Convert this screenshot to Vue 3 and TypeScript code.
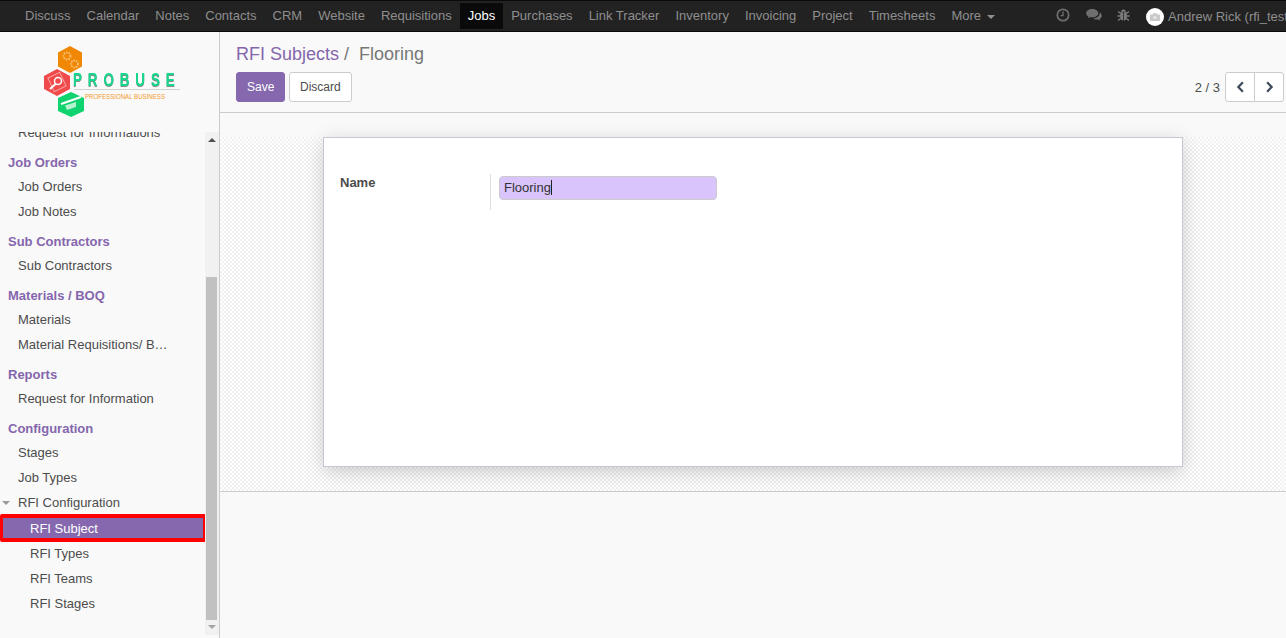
<script setup lang="ts">
const navItems: string[] = ['Discuss','Calendar','Notes','Contacts','CRM','Website','Requisitions','Jobs','Purchases','Link Tracker','Inventory','Invoicing','Project','Timesheets']
interface Row { label: string; kind: 'head' | 'item' | 'sub' | 'parent' | 'active' }
const rows: Row[] = [
  { label: 'Job Orders', kind: 'head' },
  { label: 'Job Orders', kind: 'item' },
  { label: 'Job Notes', kind: 'item' },
  { label: 'Sub Contractors', kind: 'head' },
  { label: 'Sub Contractors', kind: 'item' },
  { label: 'Materials / BOQ', kind: 'head' },
  { label: 'Materials', kind: 'item' },
  { label: 'Material Requisitions/ BOQ', kind: 'item' },
  { label: 'Reports', kind: 'head' },
  { label: 'Request for Information', kind: 'item' },
  { label: 'Configuration', kind: 'head' },
  { label: 'Stages', kind: 'item' },
  { label: 'Job Types', kind: 'item' },
  { label: 'RFI Configuration', kind: 'parent' },
  { label: 'RFI Subject', kind: 'active' },
  { label: 'RFI Types', kind: 'sub' },
  { label: 'RFI Teams', kind: 'sub' },
  { label: 'RFI Stages', kind: 'sub' },
]
</script>

<template>
  <div class="app">
    <header class="topbar">
      <nav class="topnav">
        <a v-for="n in navItems" :key="n" class="navlink" :class="{ on: n === 'Jobs' }">{{ n }}</a>
        <a class="navlink">More <span class="caret"></span></a>
      </nav>
      <div class="sys">
        <svg class="sysicon clock" viewBox="0 0 14 14" width="14" height="14">
          <circle cx="7" cy="7" r="5.7" fill="none" stroke="#6f6f6f" stroke-width="1.7"/>
          <path d="M7 3.5V7.6H4.6" fill="none" stroke="#6f6f6f" stroke-width="1.3"/>
        </svg>
        <svg class="sysicon chat" viewBox="0 0 16 14" width="16" height="14">
          <path d="M6.3 1C2.9 1 .2 2.9.2 5.2c0 1.4 1 2.6 2.400 3.300-.2.7-.6 1.300-1.100 1.800 1.100-.1 2.200-.5 3-1.200.6.100 1.200.2 1.800.2 3.400 0 6-1.900 6-4.100S9.700 1 6.300 1z" fill="#6f6f6f"/>
          <path d="M13.600 4.200c.1.3.1.7.1 1 0 2.800-2.900 5-6.600 5.100.9.800 2.200 1.300 3.700 1.300.5 0 .9 0 1.300-.1.700.6 1.500.9 2.400 1.100-.4-.5-.7-1-.9-1.600 1.200-.6 2.200-1.700 2.200-2.900 0-1.600-.9-3.100-2.200-3.900z" fill="#6f6f6f"/>
        </svg>
        <svg class="sysicon bug" viewBox="0 0 14 14" width="13" height="14">
          <path d="M4.300 3.400C4.300 2 5.500 1 7 1s2.700 1 2.700 2.400z" fill="#7b7b7b"/>
          <path d="M3.400 4.100h3.200V13C4.700 12.800 3.400 11.500 3.400 9.800zM7.400 4.100h3.200v5.700c0 1.700-1.300 3-3.200 3.200z" fill="#7b7b7b"/>
          <path d="M1.200 3.200L3.600 5.200M12.800 3.200L10.400 5.200M.4 8H3.700M13.600 8H10.300M1.200 13L3.800 10.800M12.800 13L10.200 10.800" stroke="#7b7b7b" stroke-width="1.500" fill="none"/>
        </svg>
        <span class="user">
          <span class="avatar">
            <svg viewBox="0 0 10 8" width="10" height="8"><path d="M0 1.500h2.500L3.300.3h3.400l.8 1.200H10V8H0z" fill="#c9c9c9"/><circle cx="5" cy="4.500" r="1.600" fill="#e8e8e8"/></svg>
          </span>
          <span class="uname">Andrew Rick (rfi_test)</span>
        </span>
      </div>
    </header>

    <div class="body">
      <aside class="side">
        <div class="logo">
          <svg viewBox="0 0 140 76" width="140" height="76">
            <polygon points="26,0 38,6.500 38,20.500 26,27 14,20.500 14,6.500" fill="#f18805"/>
            <circle cx="23" cy="10" r="3.500" fill="none" stroke="#f9c377" stroke-width="1.800" stroke-dasharray="1.500 1"/>
            <circle cx="30.500" cy="18" r="3.500" fill="none" stroke="#f9c377" stroke-width="1.800" stroke-dasharray="1.500 1"/>
            <polygon points="13,23 26,30 26,43 13,50 0,43 0,30" fill="#f04a4a"/>
            <rect x="6.500" y="28.500" width="13" height="15" fill="none" stroke="#f9a5a5" transform="rotate(-25 13 36)"/>
            <circle cx="14" cy="35" r="3.500" fill="none" stroke="#fff" stroke-width="1.500"/>
            <path d="M11.500 38L6 43" stroke="#fff" stroke-width="2"/>
            <polygon points="27,46 40,52 40,65 27,71 14,65 14,52" fill="#0fd36f"/>
            <path d="M17 58L37 51" stroke="#fff" stroke-width="2.200"/>
            <path d="M21 59.500l11-3.500v5l-9 3z" fill="#b5f2cf"/>
            <rect x="30" y="43" width="106" height="1" fill="#d2d2d2"/>
            <text class="ptext" transform="translate(29 40) scale(.75 1)">PROBUSE</text>
            <text class="stext" x="41" y="53" textLength="80" lengthAdjust="spacingAndGlyphs">PROFESSIONAL BUSINESS</text>
          </svg>
        </div>
        <div class="menuwrap">
          <div class="menu">
            <div class="clipped">Request for Informations</div>
            <template v-for="(r, i) in rows" :key="i">
              <div v-if="r.kind === 'head'" class="mhead">{{ r.label }}</div>
              <div v-else-if="r.kind === 'parent'" class="mitem parent"><span class="tri"></span>{{ r.label }}</div>
              <div v-else-if="r.kind === 'active'" class="mactive">{{ r.label }}</div>
              <div v-else-if="r.kind === 'sub'" class="mitem sub">{{ r.label }}</div>
              <div v-else class="mitem"><span class="ell">{{ r.label }}</span></div>
            </template>
          </div>
          <div class="sbar">
            <span class="arr up"></span>
            <div class="track"><div class="thumb"></div></div>
            <span class="arr down"></span>
          </div>
        </div>
      </aside>

      <main class="main">
        <section class="panel">
          <h1 class="crumbs"><a class="crumb">RFI Subjects</a><span class="sep">/</span><span class="cur">Flooring</span></h1>
          <div class="actions">
            <div class="btns">
              <button class="btn primary">Save</button>
              <button class="btn">Discard</button>
            </div>
            <div class="pager">
              <span class="count">2 / 3</span>
              <div class="pbtns">
                <button class="pbtn"><svg viewBox="0 0 10 14" width="9" height="12"><path d="M7.800 1.500L2.500 7l5.300 5.500" fill="none" stroke="#3f4a5c" stroke-width="2.600"/></svg></button>
                <button class="pbtn"><svg viewBox="0 0 10 14" width="9" height="12"><path d="M2.200 1.500L7.500 7l-5.300 5.500" fill="none" stroke="#3f4a5c" stroke-width="2.600"/></svg></button>
              </div>
            </div>
          </div>
        </section>
        <div class="gap"></div>
        <section class="sheetbg">
          <div class="sheet">
            <div class="field">
              <label class="flabel">Name</label>
              <div class="fvalue"><div class="finput">Flooring<span class="cursor"></span></div></div>
            </div>
          </div>
        </section>
      </main>
    </div>
  </div>
</template>

<style scoped>
.app { width: 1286px; height: 638px; overflow: hidden; display: flex; flex-direction: column; font-family: "Liberation Sans", Arial, sans-serif; font-size: 13px; color: #4c4c4c; background: #f9f9f9; }
.topbar { height: 32px; flex: none; box-sizing: border-box; background: #222; border-top: 1px solid #0a0a0a; border-bottom: 1px solid #0a0a0a; display: flex; justify-content: space-between; overflow: hidden; }
.topnav { display: flex; padding-left: 17px; }
.navlink { display: block; height: 26px; margin-top: 2px; line-height: 26px; padding: 0 8px; color: #8f8f8f; white-space: nowrap; }
.navlink.on { background: #0a0a0a; color: #fff; }
.caret { display: inline-block; margin-left: 2px; vertical-align: middle; border-top: 4px solid #8f8f8f; border-left: 4px solid transparent; border-right: 4px solid transparent; }
.sys { display: flex; align-items: center; width: 230px; flex: none; overflow: hidden; position: relative; box-sizing: border-box; }
.sysicon { flex: none; }
.clock { margin-right: 16px; margin-top: -2px; }
.chat { margin-right: 15px; margin-top: -2px; }
.bug { margin-right: 16px; margin-top: -2px; }
.user { display: flex; align-items: center; white-space: nowrap; color: #8f8f8f; }
.avatar { width: 18px; height: 18px; border-radius: 50%; background: #fff; display: flex; align-items: center; justify-content: center; margin-right: 4px; margin-top: 1px; flex: none; }
.body { flex: 1; display: flex; min-height: 0; }
.side { width: 220px; flex: none; box-sizing: border-box; border-right: 1px solid #ccc; display: flex; flex-direction: column; background: #f9f9f9; }
.logo { height: 100px; flex: none; box-sizing: border-box; padding: 14px 0 0 44px; }
.ptext { font-family: "Liberation Sans", Arial, sans-serif; font-size: 18px; font-weight: 700; letter-spacing: 7.800px; fill: #14d88c; filter: drop-shadow(0 1px 0 #8a8a8a); }
.stext { font-family: "Liberation Sans", Arial, sans-serif; font-size: 7.300px; fill: #f39a2b; }
.menuwrap { flex: 1; min-height: 0; display: flex; }
.menu { width: 205px; flex: none; overflow: hidden; position: relative; padding-top: 21px; box-sizing: border-box; height: 506px; }
.clipped { height: 0; margin-top: -17px; margin-bottom: 18px; padding-left: 18px; line-height: 18px; color: #4c4c4c; transform: translateY(-12px); white-space: nowrap; }
.mhead { height: 18px; line-height: 18px; margin-top: 9px; margin-bottom: 2px; padding-left: 8px; font-weight: 700; color: #8566ad; }
.mitem { height: 25px; line-height: 25px; padding-left: 18px; position: relative; white-space: nowrap; }
.ell { display: block; width: 150px; overflow: hidden; text-overflow: ellipsis; }
.mitem.sub { padding-left: 30px; }
.tri { position: absolute; left: 2px; top: 11px; border-top: 4px solid #999; border-left: 4px solid transparent; border-right: 4px solid transparent; }
.mactive { height: 28px; line-height: 22px; box-sizing: border-box; margin: -1px 0 -1px 0; padding-left: 27px; border-style: solid; border-color: #f00; border-width: 4px 3px; border-radius: 2px; width: 206px; background: #8568ae; color: #fff; position: relative; z-index: 1; }
.sbar { width: 14px; height: 503px; flex: none; background: #f1f1f1; display: flex; flex-direction: column; align-items: center; }
.arr { flex: none; width: 0; height: 0; margin: 6px 0; border-left: 4px solid transparent; border-right: 4px solid transparent; }
.arr.up { border-bottom: 4px solid #505050; }
.arr.down { border-top: 4px solid #a3a3a3; }
.track { flex: 1; width: 100%; min-height: 0; padding-top: 129px; box-sizing: border-box; }
.thumb { width: 11px; margin-left: 1px; height: 343px; background: #c1c1c1; }
.main { flex: 1; min-width: 0; display: flex; flex-direction: column; background: #f9f9f9; }
.panel { height: 81px; flex: none; box-sizing: border-box; border-bottom: 1px solid #ccc; padding: 10px 16px 0; }
.crumbs { margin: 0; font-size: 18px; font-weight: 400; line-height: 25px; display: flex; color: #777; }
.crumb { color: #8566ad; }
.sep { margin: 0 10px 0 5px; }
.actions { display: flex; justify-content: space-between; margin-top: 5px; }
.btns { display: flex; gap: 4px; }
.btn { height: 30px; padding: 0 10px; font: inherit; font-size: 12px; border: 1px solid #ccc; border-radius: 3px; background: #fff; color: #4c4c4c; }
.btn.primary { background: #8568ae; border-color: #8568ae; color: #fff; width: 49px; }
.pager { display: flex; align-items: center; margin-right: -14px; }
.count { margin-right: 5px; color: #4c4c4c; }
.pbtns { display: flex; }
.pbtn { width: 30px; height: 30px; background: #fff; border: 1px solid #ccc; display: flex; align-items: center; justify-content: center; padding: 0; border-radius: 0 3px 3px 0; margin-left: -1px; }
.pbtn:first-child { border-radius: 3px 0 0 3px; margin-left: 0; }
.gap { height: 24px; flex: none; background: #f9f9f9; }
.sheetbg { height: 355px; flex: none; box-sizing: border-box; border-bottom: 1px solid #ccc; padding: 0 0 0 103px; background-color: #fff; background-image: conic-gradient(#f0f0f0 25%, #fff 0 50%, #f0f0f0 0 75%, #fff 0); background-size: 4px 4px; }
.sheet { width: 860px; height: 330px; box-sizing: border-box; background: #fff; border: 1px solid #c9c7d3; box-shadow: 0 5px 20px -1px rgba(0,0,0,.2); padding: 36px 16px 0; }
.field { display: flex; }
.flabel { width: 150px; flex: none; font-weight: 700; line-height: 18px; }
.fvalue { height: 34px; border-left: 1px solid #ddd; padding: 2px 0 0 8px; }
.finput { width: 218px; height: 24px; box-sizing: border-box; background: #d9c4fc; border: 1px solid #ccc; border-radius: 4px; padding: 0 0 2px 4px; color: #333; font-size: 13px; display: flex; align-items: center; }
.cursor { display: inline-block; width: 1px; height: 15px; background: #222; }
</style>

<style>
html, body { margin: 0; padding: 0; overflow: hidden; }
</style>
